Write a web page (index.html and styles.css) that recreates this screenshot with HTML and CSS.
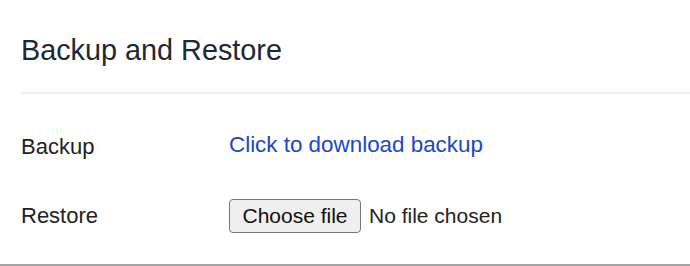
FILE: index.html
```html
<!DOCTYPE html>
<html>
<head>
<meta charset="utf-8">
<link rel="stylesheet" href="styles.css">
</head>
<body>
<div class="page">
  <h1 class="title">Backup and Restore</h1>
  <div class="divider"></div>
  <div class="row row-backup">
    <div class="label">Backup</div>
    <a class="link" href="#">Click to download backup</a>
  </div>
  <div class="row row-restore">
    <div class="label">Restore</div>
    <div class="file">
      <button class="file-btn" type="button">Choose file</button>
      <span class="file-name">No file chosen</span>
    </div>
  </div>
</div>
</body>
</html>
```
FILE: styles.css
```css
html, body {
  margin: 0;
  padding: 0;
  background: #ffffff;
}
.page {
  box-sizing: border-box;
  height: 266px;
  padding-left: 21px;
  padding-top: 34px;
  border-bottom: 2px solid #a4a4a4;
  font-family: "Liberation Sans", Arial, sans-serif;
  overflow: hidden;
}
.title {
  margin: 0;
  font-size: 28.8px;
  line-height: 32px;
  font-weight: normal;
  color: #212833;
}
.divider {
  margin-top: 26px;
  height: 2px;
  background: #eeeeee;
}
.row {
  display: flex;
}
.row-backup {
  margin-top: 38px;
  align-items: flex-start;
}
.row-restore {
  margin-top: 37px;
  align-items: center;
}
.label {
  width: 208px;
  flex: none;
  font-size: 22px;
  line-height: 30px;
  color: #222222;
}
.link {
  font-size: 22.4px;
  line-height: 26px;
  color: #1a47c9;
  text-decoration: none;
}
.file {
  display: flex;
  align-items: center;
  gap: 8px;
  font-size: 21px;
  color: #222222;
}
.file-btn {
  box-sizing: border-box;
  font-family: "Liberation Sans", Arial, sans-serif;
  font-size: 21px;
  color: #111111;
  width: 132px;
  height: 34px;
  padding: 0;
  margin: 0;
  border: 1px solid #767676;
  border-radius: 4px;
  background: #efefef;
}
.file-name {
  line-height: 26px;
}
```
